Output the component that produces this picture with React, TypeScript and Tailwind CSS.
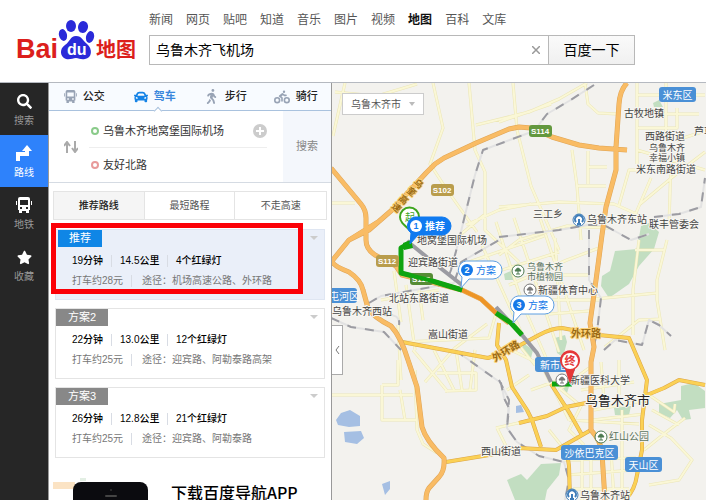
import { useState } from 'react';
import { FaCar, FaSearch, FaStar, FaWalking, FaBiking } from 'react-icons/fa';

const navLinks = ['新闻', '网页', '贴吧', '知道', '音乐', '图片', '视频', '地图', '百科', '文库'];

const plans = [
  { tag: '推荐', time: '19分钟', distance: '14.5公里', lights: '4个红绿灯', fare: '打车约28元', via: '途径：机场高速公路、外环路' },
  { tag: '方案2', time: '22分钟', distance: '13.0公里', lights: '12个红绿灯', fare: '打车约25元', via: '途径：迎宾路、阿勒泰路高架' },
  { tag: '方案3', time: '26分钟', distance: '12.8公里', lights: '21个红绿灯', fare: '打车约25元', via: '途径：迎宾路、阿勒泰路' },
];

const minorRoads = [
  'M346 83 L334 136 M336 92 L378 96 L418 84 M434 83 L444 128 L431 164 L448 190 L478 232',
  'M470 83 L476 150 L486 172 L486 230 L520 262 M477 125 L530 112 L560 99 L588 83 M332 203 H356',
  'M514 83 L518 130 L532 186 L545 216 L560 250 M500 122 L552 104 M500 207 L560 202 L615 204 L640 215',
  'M586 83 L589 104 L599 113 L618 114 M573 150 L578 186 L582 240 M589 151 V184 M578 186 H607 M589 167 H608',
  'M638 83 V164 M638 95 H706 M638 114 H700 M667 83 V135 M638 128 H678 V108 M638 150 L706 170',
  'M620 205 L630 170 L638 170 M706 131 L678 140 M634 220 L652 178 M672 160 L670 225 M640 205 L676 175 L706 152',
  'M467 225 L500 210 L532 204 M455 240 L485 215 M500 255 L520 240 L568 226 L610 228 M510 285 L568 260 L600 248',
  'M497 222 L524 305 L548 360 M515 218 L560 352 M540 215 L555 260 L585 350 M556 238 L562 340 M482 243 L523 334',
  'M470 262 L545 236 M478 278 L560 252 M535 275 H590 M545 300 H600 M550 314 L590 311 M596 299 L658 293',
  'M668 240 L658 280 V300 L666 350 M634 335 V290 L640 240 M636 250 H666 M606 347 L640 320 L662 319',
  'M395 271 L402 322 M407 285 L416 350 M420 290 L424 320 M382 300 L440 290 M404 342 L490 338 L498 310',
  'M414 350 L449 392 M435 350 L455 390 M457 350 L463 390 M476 350 L471 390 M438 373 H477 V390 L446 391 M426 382 L456 348 L488 324',
  'M332 395 H414 M383 385 V420 H417 M383 385 H399 V360 M401 390 L406 420 M416 370 L418 430 L424 444 L438 453 M399 325 L402 380',
  'M497 428 L532 420 M498 428 L510 452 M508 390 L530 375 M512 350 L553 370 M520 345 L536 365 M560 390 L590 368',
  'M582 390 L635 382 M595 410 L648 400 M594 420 L645 414 M570 420 L640 424 M565 460 L637 458 M568 475 L635 470 M574 489 H630',
  'M583 450 V500 M592 450 V500 M612 450 L615 500 M623 410 V500 M602 362 L605 400 M620 360 V395 M540 360 L570 420',
  'M650 425 L672 438 L693 460 L680 480 L650 485 M653 410 L680 425 M645 450 L670 430 L686 418 M650 395 L675 412 L676 404',
  'M560 388 L582 406 L570 430 L585 445 M532 390 L560 380 M550 430 L570 455',
];

const highways = [
  'M350 240 L370 230 L393 210 L427 173 L436 164 L445 158 L477 143 L510 129 L520 127 L532 128 L553 137 L580 145 L600 148 L628 150',
  'M332 168 L362 204 Q367 210 367 218 V240 Q367 249 376 255 L397 266 L403 275 L428 281 L463 290 L482 299 L497 313 L510 323',
  'M382 220 L350 240 L333 261 Q334 266 350 272 Q362 280 364 290 L369 308 Q374 317 392 326 Q402 337 409 360 L418 387 L423 427 Q427 441 445 458 Q446 471 440 477 L430 488 Q427 492 427 500',
  'M628 83 Q621 90 620 104 L617 147 V170 L607 207 L603 235 L597 280 L591 323 L595 347 L592 362 V430 Q602 441 603 453 L606 500',
];

const yellowRoads = [
  'M403 342 L489 358 L512 350 L540 335 Q553 328 563 328 L600 335 L630 338 L648 380 L643 420 L643 450 L638 475 Q636 490 626 500',
  'M648 395 L665 388 L680 380 L706 385',
  'M500 323 L498 345 L507 360 L513 387 L528 410 L533 420 L542 447',
  'M447 462 L490 455 L520 448 L557 450 L592 430',
  'M520 423 L548 416 L567 407 L587 403',
  'M552 384 L570 412 L583 435',
  'M568 452 L570 466 L571 500',
];

const railways = [
  'M595 85 L570 101 L548 114 L535 131 L484 150 L476 175 L466 215 L460 240 L452 270 L450 275',
  'M500 237 L560 230 L589 225 L605 225 L632 240 L650 234 M655 217 L680 214 L702 207 L706 178',
  'M590 230 V280 L602 298 L598 332 L592 360',
  'M370 303 L382 296 L455 283 L462 262 L500 240 M332 318 L352 327 L385 332 L402 350 M384 315 Q402 313 400 325',
  'M403 342 L460 353 L502 383 L505 398 L510 408 L508 428 L518 442',
  'M500 380 L510 400 L508 428 L518 442 L540 456 L565 462 L570 480 L566 500 M605 350 L616 340 L643 345 L650 320 L660 325 L672 336',
];

const mapLabels = [
  { x: 625, y: 117, text: '古牧地镇' },
  { x: 695, y: 135, text: '芦草' },
  { x: 646, y: 140, text: '西路街道' },
  { x: 650, y: 151, text: '乌鲁木齐', small: true },
  { x: 650, y: 161, text: '幸福小镇', small: true },
  { x: 637, y: 173, text: '米东南路街道' },
  { x: 534, y: 218, text: '三工乡' },
  { x: 650, y: 228, text: '联丰管委会' },
  { x: 588, y: 223, text: '乌鲁木齐东站' },
  { x: 418, y: 244, text: '地窝堡国际机场' },
  { x: 409, y: 266, text: '迎宾路街道' },
  { x: 390, y: 302, text: '北站东路街道' },
  { x: 333, y: 315, text: '乌鲁木齐西站' },
  { x: 429, y: 338, text: '嵩山街道' },
  { x: 482, y: 455, text: '西山街道' },
  { x: 571, y: 384, text: '新疆医科大学' },
  { x: 528, y: 270, text: '乌鲁木齐', soft: true, small: true },
  { x: 528, y: 280, text: '市植物园', soft: true, small: true },
  { x: 539, y: 294, text: '新疆体育中心' },
  { x: 610, y: 440, text: '红山公园', soft: true },
  { x: 581, y: 499, text: '乌鲁木齐站' },
];

const districts = [
  { x: 660, y: 87, w: 37, text: '米东区' },
  { x: 322, y: 288, w: 36, text: '头屯河区' },
  { x: 536, y: 357, w: 40, text: '新市区' },
  { x: 562, y: 445, w: 57, text: '沙依巴克区' },
  { x: 626, y: 457, w: 37, text: '天山区' },
];

const expressway = [
  { x: 420, y: 183, char: '乌' },
  { x: 413, y: 191, char: '奎' },
  { x: 405, y: 199, char: '高' },
  { x: 398, y: 207, char: '速' },
];

function Logo() {
  return (
    <svg width="126" height="48" viewBox="16 17 126 48" role="img" aria-label="Baidu 地图">
      <g fill="#dc1f1c" fontWeight="bold">
        <text x="16" y="58" fontSize="27">Bai</text>
        <text x="96" y="57" fontSize="20">地图</text>
      </g>
      <g fill="#2a2ad9">
        <ellipse cx="63" cy="35" rx="4" ry="6" transform="rotate(-14 63 35)" />
        <ellipse cx="71" cy="26" rx="5" ry="6" />
        <ellipse cx="83" cy="27" rx="5" ry="6" transform="rotate(12 83 27)" />
        <ellipse cx="90" cy="37" rx="4" ry="6" transform="rotate(14 90 37)" />
        <path d="M76 36 C82 36 83 41 87 44 C93 49 92 58 85 59 C81 60 79 58 76 58 C73 58 70 60 66 59 C60 57 59 49 65 45 C70 42 70 36 76 36Z" />
      </g>
      <text x="67" y="55" fontSize="16" fill="#fff" fontWeight="bold">du</text>
    </svg>
  );
}

function RouteIcon() {
  return (
    <svg width="18" height="17" viewBox="0 0 18 17">
      <path d="M3 16 V9 H12 V4" fill="none" stroke="currentColor" strokeWidth="4" />
      <path d="M7 6 L12 0 L17 6Z" fill="currentColor" />
    </svg>
  );
}

function BusIcon({ size }: { size: number }) {
  return (
    <svg width={size} height={size} viewBox="0 0 16 16" fill="currentColor">
      <path
        fillRule="evenodd"
        d="M4 0 H12 Q14 0 14 2 V13 H13 V16 H10 V14 H6 V16 H3 V13 H2 V2 Q2 0 4 0Z M4 3 V8 H12 V3Z M4 10 V12 H6 V10Z M10 10 V12 H12 V10Z"
      />
      <path d="M0 4 H1 V8 H0Z M15 4 H16 V8 H15Z" />
    </svg>
  );
}

function SideNav() {
  const [active, setActive] = useState('路线');
  const items = [
    { name: '搜索', icon: <FaSearch size={15} /> },
    { name: '路线', icon: <RouteIcon /> },
    { name: '地铁', icon: <BusIcon size={16} /> },
    { name: '收藏', icon: <FaStar size={15} /> },
  ];

  return (
    <nav className="w-12 shrink-0 bg-[#262626]">
      {items.map((item) => (
        <button
          key={item.name}
          type="button"
          onClick={() => setActive(item.name)}
          className={`flex h-13 w-full flex-col items-center pt-2.5 text-white ${active === item.name ? 'bg-[#2e82fb]' : ''}`}
        >
          <span className="flex h-4 items-center">{item.icon}</span>
          <span className={`mt-1 text-[10px] leading-4 ${active === item.name ? 'text-white' : 'text-[#999]'}`}>{item.name}</span>
        </button>
      ))}
    </nav>
  );
}

function TravelTabs() {
  const [mode, setMode] = useState('驾车');
  const modes = [
    { name: '公交', icon: <BusIcon size={13} /> },
    { name: '驾车', icon: <FaCar size={14} /> },
    { name: '步行', icon: <FaWalking size={15} /> },
    { name: '骑行', icon: <FaBiking size={16} /> },
  ];

  return (
    <div className="grid h-7 shrink-0 grid-cols-4 border-b border-[#a9c2de] bg-[#f8fbff]">
      {modes.map((m) => (
        <button
          key={m.name}
          type="button"
          onClick={() => setMode(m.name)}
          className={`relative flex items-center justify-center gap-1.5 text-[11px] ${mode === m.name ? 'font-bold text-[#3a87dc]' : 'font-medium text-[#222]'}`}
        >
          <span className={mode === m.name ? 'text-[#1583e6]' : 'text-[#98a3b5]'}>{m.icon}</span>
          {m.name}
          {mode === m.name && (
            <span className="absolute -bottom-1 left-1/2 size-1.5 rotate-45 border-t border-l border-[#a9c2de] bg-white" />
          )}
        </button>
      ))}
    </div>
  );
}

function RouteForm() {
  const [from, setFrom] = useState('乌鲁木齐地窝堡国际机场');
  const [to, setTo] = useState('友好北路');

  return (
    <form onSubmit={(e) => e.preventDefault()} className="flex h-18 shrink-0 border-b border-[#d5dbe3]">
      <button type="button" aria-label="交换起终点" className="flex w-10 items-center justify-center pl-1">
        <svg width="14" height="12" viewBox="0 0 14 12" fill="none" stroke="#aaa" strokeWidth="2">
          <path d="M3 12 V2 M0 5 L3 1 L6 5 M11 0 V10 M8 7 L11 11 L14 7" />
        </svg>
      </button>
      <div className="flex flex-1 flex-col pr-4">
        <div className="flex h-9 items-center gap-1 pt-1 pl-0.5">
          <span className="size-2 rounded-full border-2 border-[#8acb8a]" />
          <input
            aria-label="起点"
            value={from}
            onChange={(e) => setFrom(e.target.value)}
            className="w-0 flex-1 text-[11px] text-[#333] outline-none"
          />
          <button type="button" aria-label="添加途经点" className="flex size-3.5 items-center justify-center rounded-full bg-[#ccc]">
            <svg width="8" height="8" viewBox="0 0 8 8" stroke="#fff" strokeWidth="2">
              <path d="M4 0 V8 M0 4 H8" />
            </svg>
          </button>
        </div>
        <div className="flex flex-1 items-center gap-1 border-t border-[#eee] pl-0.5">
          <span className="size-2 rounded-full border-2 border-[#e89a9a]" />
          <input
            aria-label="终点"
            value={to}
            onChange={(e) => setTo(e.target.value)}
            className="w-0 flex-1 text-[11px] text-[#333] outline-none"
          />
        </div>
      </div>
      <button type="submit" className="w-12 bg-[#f4f7fc] text-[11px] text-[#888]">搜索</button>
    </form>
  );
}

function PlanCard({ plan, active }: { plan: (typeof plans)[number]; active: boolean }) {
  return (
    <article className={`relative h-[71px] shrink-0 border ${active ? 'border-[#dfe6f2] bg-[#eaeff9]' : 'border-[#e4e4e4] bg-white'}`}>
      <h2 className={`h-[17px] text-center text-[11px] leading-[17px] text-white ${active ? 'ml-0.5 w-11 bg-[#0f86e6]' : 'w-13 bg-[#888]'}`}>
        {plan.tag}
      </h2>
      <button type="button" aria-label="展开" className="absolute top-1.5 right-1.5 border-x-4 border-t-4 border-x-transparent border-t-[#ccc]" />
      <div className="mt-1.5 flex items-center pl-4 text-[10px] leading-4 font-medium text-black">
        <span className="w-10 border-r border-[#d8dce4] leading-3">{plan.time}</span>
        <span className="w-14 border-r border-[#d8dce4] pl-2 leading-3">{plan.distance}</span>
        <span className="pl-2">{plan.lights}</span>
      </div>
      <div className="mt-1 flex items-center pl-4 text-[10px] leading-4 text-[#777]">
        <span className="w-15 border-r border-[#d8dce4] leading-3">{plan.fare}</span>
        <span className="pl-2.5">{plan.via}</span>
      </div>
    </article>
  );
}

function RoutePanel() {
  const [filter, setFilter] = useState('推荐路线');

  return (
    <section className="flex w-[284px] shrink-0 flex-col overflow-hidden border-x border-[#999] bg-white">
      <TravelTabs />
      <RouteForm />
      <div className="mx-1 mt-2 grid h-[29px] shrink-0 grid-cols-3 divide-x divide-[#e4e4e4] border border-[#e4e4e4]">
        {['推荐路线', '最短路程', '不走高速'].map((name) => (
          <button
            key={name}
            type="button"
            onClick={() => setFilter(name)}
            className={`text-[10px] ${filter === name ? 'bg-[#f5f5f5] font-medium text-[#222]' : 'text-[#555]'}`}
          >
            {name}
          </button>
        ))}
      </div>
      <div className="relative mx-1.5 mt-[9px] flex flex-col gap-2">
        {plans.map((plan, i) => (
          <PlanCard key={plan.tag} plan={plan} active={i === 0} />
        ))}
        <div className="pointer-events-none absolute -top-1.5 -left-1 h-[71px] w-[252px] border-5 border-[#fb0007]" />
      </div>
      <a href="#app" className="mx-1 mt-5 flex h-12 shrink-0">
        <svg width="110" height="48" viewBox="0 0 110 48">
          <path d="M0 4 H22 V11 H0Z" fill="#fbe3c4" />
          <path d="M27 0 H33 V3 H27Z" fill="#e3efe4" />
          <rect x="20" y="4" width="75" height="60" rx="8" fill="#0b0b0f" />
          <circle cx="58" cy="12" r="1" fill="#333" />
          <rect x="52" y="17" width="12" height="2" rx="1" fill="#444" />
        </svg>
        <span className="pt-0.5 pl-2 font-['Noto_Sans_CJK_SC',sans-serif] text-[16px] leading-6 font-medium text-black">下载百度导航APP</span>
      </a>
    </section>
  );
}

function Shield({ x, y, text, color }: { x: number; y: number; text: string; color: string }) {
  return (
    <g>
      <rect x={x} y={y} width="23" height="12" rx="3" fill={color} />
      <text x={x + 11} y={y + 9} fontSize="8" fontWeight="bold" fill="#fff" textAnchor="middle">{text}</text>
    </g>
  );
}

function Poi({ x, y, color }: { x: number; y: number; color: string }) {
  return (
    <g fill="#fff" stroke={color}>
      <circle cx={x} cy={y} r="6" />
      <path d={`M${x - 2} ${y + 3} h4 M${x} ${y + 3} v-4 M${x - 3} ${y} q3 -6 6 0 z`} fill={color} />
    </g>
  );
}

function StationIcon({ x, y }: { x: number; y: number }) {
  return (
    <g fill="none" stroke="#3e7cb8">
      <circle cx={x} cy={y} r="6" fill="#fff" />
      <path d={`M${x - 3} ${y + 2} a4 4 0 1 1 6 0 M${x - 2} ${y + 4} h4 M${x} ${y + 4} v-5`} strokeWidth="2" />
    </g>
  );
}

function Callout({ x, y, n, text, active }: { x: number; y: number; n: number; text: string; active?: boolean }) {
  const fg = active ? '#fff' : '#1578e8';
  const bg = active ? '#0f7af0' : '#fff';
  return (
    <g>
      <path
        d={`M${x + 9} ${y} h27 a9 9 0 0 1 0 18 h-24 l-8 9 l1 -11 a9 9 0 0 1 4 -16z`}
        fill={bg}
        stroke={active ? '#0f7af0' : '#5d9ee2'}
      />
      <circle cx={x + 10} cy={y + 9} r="6" fill={fg} />
      <text x={x + 10} y={y + 12} fontSize="9" fontWeight="bold" fill={bg} textAnchor="middle">{n}</text>
      <text x={x + 19} y={y + 13} fontSize="10" fontWeight={active ? 'bold' : 'normal'} fill={fg}>{text}</text>
    </g>
  );
}

function MapView() {
  return (
    <main className="relative flex-1 overflow-hidden bg-[#f3f2ee]">
      <svg className="absolute inset-0 size-full" role="img" aria-label="乌鲁木齐市地图">
        <g transform="translate(-333 -83)" strokeLinejoin="round">
          <g fill="#c2dec1">
            <path d="M616 251 L638 249 L642 226 L650 223 L660 232 L655 249 L640 266 L630 284 L610 298 L602 286 L603 276 L611 271Z" />
            <path d="M556 338 L566 335 L568 342 L564 357 L558 353Z M505 274 L514 270 V280 L506 280Z M523 342 L534 350 L532 358 L524 350Z" />
            <path d="M508 480 L522 474 L528 480 L542 464 L562 463 L560 475 L548 490 L546 500 H516Z M654 103 L660 100 L664 107 H655Z" />
            <path d="M660 404 L682 400 V386 L695 383 L706 391 V408 L690 410 L692 419 L684 420 L678 410 L671 418 L660 413Z M615 408 L632 406 L630 415 L616 415Z M557 380 H572 L568 393Z" />
          </g>
          <g fill="#a5bfe3">
            <path d="M337 420 L342 413 L351 410 L361 416 L361 426 L350 427 L339 425Z M345 432 L362 431 L365 438 L358 444 L346 442Z M383 484 L391 481 L391 489 L386 495Z M517 406 L522 405 L525 412 L517 413Z" />
          </g>
          <path d={minorRoads.join(' ')} fill="none" stroke="#ebe6b6" strokeWidth="3" />
          <path d={minorRoads.join(' ')} fill="none" stroke="#faf7d6" strokeWidth="2" />
          <path d={railways.join(' ')} fill="none" stroke="#e2e2e2" strokeWidth="2" />
          <path d={railways.join(' ')} fill="none" stroke="#9c9ca2" strokeWidth="2" strokeDasharray="9 9" />
          <path d={yellowRoads.join(' ')} fill="none" stroke="#dba548" strokeWidth="4" />
          <path d={yellowRoads.join(' ')} fill="none" stroke="#fbd155" strokeWidth="3" />
          <path d={highways.join(' ')} fill="none" stroke="#dfa556" strokeWidth="5" />
          <path d={highways.join(' ')} fill="none" stroke="#f9bc65" strokeWidth="4" />

          <g fill="none" strokeWidth="4">
            <path d="M408 241 L435 263 L463 285 M497 307 L523 335 L538 353 L552 382" stroke="#9b9ba2" />
            <path d="M463 290 L482 299 L497 313" stroke="#ed9526" />
            <path d="M411 243 L402 248 V273 L430 280 L463 290 M497 313 L512 323 L523 335 M553 384 H573" stroke="#0fa40f" strokeWidth="5" />
          </g>
          <path d="M404 243 L412 240 L414 248 L405 250Z" fill="#0fa40f" />

          <Shield x={530} y={125} text="S114" color="#63983e" />
          <Shield x={432} y={184} text="S102" color="#b99d4c" />
          <Shield x={377} y={255} text="S112" color="#b99d4c" />
          <Shield x={411} y={273} text="S115" color="#568c35" />
          <path d="M402 273 L430 280 L463 290" fill="none" stroke="#0fa40f" strokeWidth="4" />

          {districts.map((d) => (
            <g key={d.text}>
              <rect x={d.x} y={d.y} width={d.w} height="15" rx="3" fill="#4a90d6" />
              <text x={d.x + d.w / 2} y={d.y + 12} fontSize="10" fill="#fff" textAnchor="middle">{d.text}</text>
            </g>
          ))}

          <StationIcon x={580} y={220} />
          <StationIcon x={573} y={495} />
          <Poi x={519} y={271} color="#4c7a50" />
          <Poi x={531} y={290} color="#777" />
          <Poi x={602} y={437} color="#4c7a50" />
          <Poi x={563} y={380} color="#777" />

          <g stroke="#f7f6f2" strokeWidth="2" paintOrder="stroke">
            {mapLabels.map((l) => (
              <text key={l.text + l.y} x={l.x} y={l.y} fontSize={l.small ? 9 : 10} fill={l.soft ? '#5d7461' : '#444'}>{l.text}</text>
            ))}
            <text x="586" y="405" fontSize="13" fill="#222">乌鲁木齐市</text>
            <g fontSize="10" fontWeight="bold" fill="#9a6a14" stroke="#fbd27a">
              <text x="572" y="337">外环路</text>
              <text x="496" y="362" transform="rotate(-32 496 362)">外环路</text>
              {expressway.map((c) => (
                <text key={c.char} x={c.x} y={c.y + 4} fontSize="9" textAnchor="middle" transform={`rotate(40 ${c.x} ${c.y})`}>{c.char}</text>
              ))}
            </g>
          </g>

          <path d="M411 230 C405 225 401 222 401 217 A9 9 0 0 1 420 217 C420 222 416 226 411 230Z" fill="#fff" stroke="#3da51e" strokeWidth="2" />
          <text x="411" y="221" fontSize="10" fill="#3da51e" textAnchor="middle">起</text>
          <path d="M571 384 L566 369 A10 10 0 1 1 576 369Z" fill="#e53838" />
          <circle cx="571" cy="361" r="8" fill="#fff" />
          <text x="571" y="365" fontSize="11" fontWeight="bold" fill="#e53838" textAnchor="middle">终</text>

          <Callout x={458} y={261} n={2} text="方案" />
          <Callout x={510} y={296} n={3} text="方案" />
          <Callout x={407} y={217} n={1} text="推荐" active />
        </g>
      </svg>
      <button
        type="button"
        className="absolute top-2.5 left-2.5 flex h-[22px] w-[82px] items-center gap-2 border border-[#ccc] bg-white pl-2 text-[10px] text-[#555]"
      >
        乌鲁木齐市
        <span className="border-x-3 border-t-4 border-x-transparent border-t-[#bbb]" />
      </button>
      <button
        type="button"
        aria-label="收起面板"
        className="absolute top-[242px] left-0 flex h-[50px] w-[11px] items-center justify-center border border-l-0 border-[#aaa] bg-white"
      >
        <svg width="5" height="8" viewBox="0 0 5 8" fill="none" stroke="#777">
          <path d="M4 0 L1 4 L4 8" />
        </svg>
      </button>
    </main>
  );
}

export default function App() {
  const [query, setQuery] = useState('乌鲁木齐飞机场');

  return (
    <div className="flex h-screen flex-col overflow-hidden bg-white font-['Liberation_Sans','Noto_Sans_CJK_SC',sans-serif]">
      <header className="flex h-[83px] shrink-0 border-b border-[#b5b9c0] pl-4">
        <a href="#home" className="mt-[17px] w-[133px] shrink-0">
          <Logo />
        </a>
        <div className="flex-1 pt-3">
          <nav className="flex h-4 gap-[13px] text-[12px] leading-4 text-[#555]">
            {navLinks.map((name) => (
              <a key={name} href="#nav" className={name === '地图' ? 'font-bold text-[#111]' : ''}>{name}</a>
            ))}
          </nav>
          <form onSubmit={(e) => e.preventDefault()} className="mt-[7px] flex h-[30px] max-w-[486px]">
            <div className="flex flex-1 items-center border border-[#b8b8b8] pr-2 pl-1.5">
              <input
                aria-label="搜索地点"
                value={query}
                onChange={(e) => setQuery(e.target.value)}
                className="w-0 flex-1 text-[14px] text-black outline-none"
              />
              <button type="button" aria-label="清空" onClick={() => setQuery('')}>
                <svg width="8" height="8" viewBox="0 0 8 8" stroke="#999" strokeWidth="1.500">
                  <path d="M0 0 L8 8 M8 0 L0 8" />
                </svg>
              </button>
            </div>
            <button type="submit" className="w-[86px] border border-l-0 border-[#b8b8b8] bg-linear-to-b from-[#fafafa] to-[#f0f0f0] text-[14px] text-black">
              百度一下
            </button>
          </form>
        </div>
      </header>
      <div className="flex min-h-0 flex-1">
        <SideNav />
        <RoutePanel />
        <MapView />
      </div>
    </div>
  );
}
